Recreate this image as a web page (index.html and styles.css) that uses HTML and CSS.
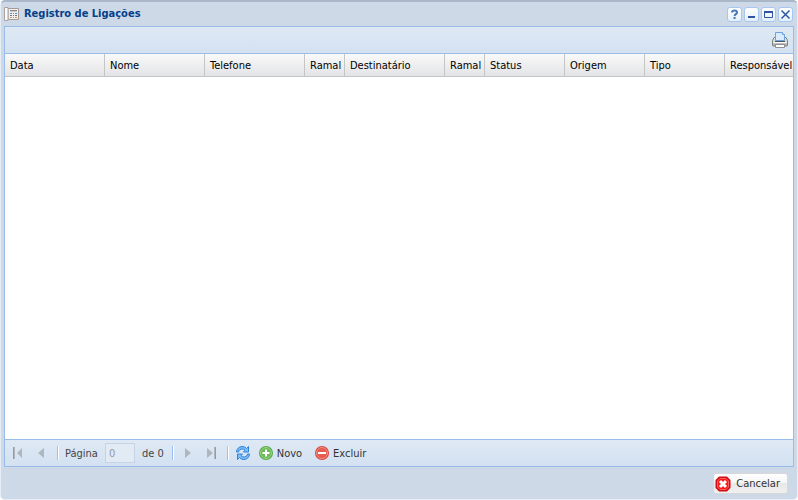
FILE: index.html
```html
<!DOCTYPE html>
<html lang="pt-BR">
<head>
<meta charset="utf-8">
<title>Registro de Ligações</title>
<link rel="stylesheet" href="styles.css">
</head>
<body>
<main class="window">
  <header class="titlebar">
    <svg class="icon" viewBox="0 0 16 16" aria-hidden="true">
      <path d="M4 2.500h10.500v11H4z" fill="#f1efee" stroke="#a49c98"/>
      <path d="M.5 1.500h3.500v13H.5z" fill="#fafafa" stroke="#aaa3a0"/>
      <path d="M6 4.500h7" stroke="#8a8a8a"/>
      <path d="M6 7.500h2M9 7.500h1M11 7.500h2" stroke="#4390df"/>
      <path d="M6 9.500h2M9 9.500h1M11 9.500h2" stroke="#777"/>
      <path d="M6 11.500h2M9 11.500h1M11 11.500h2" stroke="#e89048"/>
      <path d="M6 5.500h7" stroke="#c9c9c9"/>
    </svg>
    <h1 class="title">Registro de Ligações</h1>
    <div class="tools">
      <button class="tool" type="button" aria-label="Ajuda"><svg viewBox="0 0 13 13"><path d="M4 4.500q0-2 2.500-2T9 4.500q0 1-1 1.500t-1.500 2M6.500 9v2" fill="none" stroke="#4a7ab0" stroke-width="2"/></svg></button>
      <button class="tool" type="button" aria-label="Minimizar"><svg viewBox="0 0 13 13"><path d="M3 9h7" stroke="#2f54a5" stroke-width="2"/></svg></button>
      <button class="tool" type="button" aria-label="Maximizar"><svg viewBox="0 0 13 13"><path d="M2.500 3.500h8v6h-8z" fill="none" stroke="#2f54a5"/><path d="M2 4h9" stroke="#2f54a5" stroke-width="2"/></svg></button>
      <button class="tool" type="button" aria-label="Fechar"><svg viewBox="0 0 13 13"><path d="M2.500 2.500l8 8M10.500 2.500l-8 8" stroke="#2f54a5" stroke-width="1.500"/></svg></button>
    </div>
  </header>

  <section class="panel">
    <div class="toolbar">
      <button class="plain" type="button" aria-label="Imprimir">
        <svg class="icon" viewBox="0 0 16 16">
          <defs>
            <linearGradient id="printer" x2="0" y2="1"><stop stop-color="#eee"/><stop offset="1" stop-color="#a8a8a8"/></linearGradient>
          </defs>
          <path d="M2 5.500h12l1.500 3v4.500q0 1-1 1h-13q-1 0-1-1V8.500z" fill="url(#printer)" stroke="#808080"/>
          <path d="M3.500 8.500v-8h7l2 2v6z" fill="#d9ecfd" stroke="#6ba3dc"/>
          <path d="M10.500.5v2h2" fill="#fff" stroke="#6ba3dc"/>
          <path d="M3 9.500h10" stroke="#555"/>
          <path d="M1 10.500h14" stroke="#fafafa"/>
          <path d="M3.500 12.500h9v3h-9z" fill="#fff" stroke="#909090"/>
        </svg>
      </button>
    </div>
    <div class="grid">
      <table class="calls">
        <colgroup>
          <col class="wide"><col class="wide"><col class="wide"><col class="narrow"><col class="wide"><col class="narrow"><col class="medium"><col class="medium"><col class="medium"><col>
        </colgroup>
        <thead>
          <tr><th>Data</th><th>Nome</th><th>Telefone</th><th>Ramal</th><th>Destinatário</th><th>Ramal</th><th>Status</th><th>Origem</th><th>Tipo</th><th>Responsável</th></tr>
        </thead>
        <tbody></tbody>
      </table>
    </div>
    <nav class="pager" aria-label="Paginação">
      <button class="page-btn" type="button" disabled aria-label="Primeira página"><svg class="icon" viewBox="0 0 16 16"><path d="M3 2h2v12H3zM12 3v10L7 8z" fill="#b0b6be"/><path d="M3.500 2v12" stroke="#949ba4"/></svg></button>
      <button class="page-btn" type="button" disabled aria-label="Página anterior"><svg class="icon" viewBox="0 0 16 16"><path d="M11 3v10L5 8z" fill="#b0b6be"/></svg></button>
      <span class="sep"></span>
      <label class="muted" for="page">Página</label>
      <input class="page-input" id="page" type="text" value="0" disabled>
      <span class="muted">de 0</span>
      <span class="sep"></span>
      <button class="page-btn" type="button" disabled aria-label="Próxima página"><svg class="icon" viewBox="0 0 16 16"><path d="M5 3v10l6-5z" fill="#b0b6be"/></svg></button>
      <button class="page-btn" type="button" disabled aria-label="Última página"><svg class="icon" viewBox="0 0 16 16"><path d="M4 3v10l6-5zM11 2h2v12h-2z" fill="#b0b6be"/><path d="M12.500 2v12" stroke="#949ba4"/></svg></button>
      <span class="sep"></span>
      <button class="page-btn" type="button" aria-label="Atualizar">
        <svg class="icon" viewBox="0 0 16 16">
          <g fill="#7cc0f8" stroke="#2f80d8" stroke-linejoin="round">
            <path d="M1.500 7q.5-5 5.500-5.500 3 0 4.500 2l2-2v5.500H8.500l1.500-1.800Q8.500 3.700 6.500 4 3.500 4.500 3.500 7z"/>
            <path d="M14.500 9q-.5 5-5.500 5.500-3 0-4.500-2l-2 2V9h5L6 10.800q1.500 1.500 3.500 1.200 3-.5 3-3z"/>
          </g>
        </svg>
      </button>
      <button class="action" type="button">
        <svg class="icon" viewBox="0 0 16 16"><circle cx="8" cy="8" r="7" fill="#58a848"/><circle cx="8" cy="8" r="5.500" fill="#6cba58" stroke="#98d488"/><path d="M8 4.500v7M4.500 8h7" stroke="#fff" stroke-width="2"/></svg>
        <span>Novo</span>
      </button>
      <button class="action" type="button">
        <svg class="icon" viewBox="0 0 16 16"><circle cx="8" cy="8" r="7" fill="#d8443c"/><circle cx="8" cy="8" r="5.500" fill="#e65c4e" stroke="#f29385"/><path d="M4 8h8" stroke="#fff" stroke-width="2"/></svg>
        <span>Excluir</span>
      </button>
    </nav>
  </section>

  <footer class="buttons">
    <button class="cancel" type="button">
      <svg class="icon" viewBox="0 0 16 16"><path d="M4.500 1.500h7l3 3v7l-3 3h-7l-3-3v-7z" fill="#f81c1c" stroke="#d01014" stroke-width="2" stroke-linejoin="round"/><path d="M5 2.500h6L13.500 5v6L11 13.500H5L2.500 11V5z" fill="none" stroke="#fc5c5c"/><path d="M5 5l6 6M11 5l-6 6" stroke="#fff" stroke-width="3"/></svg>
      <span>Cancelar</span>
    </button>
  </footer>
</main>
</body>
</html>
```
FILE: styles.css
```css
* { box-sizing: border-box; }

body {
  margin: 0;
  background: #fff;
  color: #000;
  font: 11px/14px "DejaVu Sans Condensed", Tahoma, sans-serif;
}

button, input { font: inherit; color: inherit; }

button {
  display: flex;
  align-items: center;
  padding: 0;
  border: 0;
  background: none;
}

.icon { display: block; width: 16px; height: 16px; flex: none; }

.window {
  display: flex;
  flex-direction: column;
  min-height: 100vh;
  padding: 0 3px;
  border: 1px solid #e6edf7;
  border-top: 2px solid #a9b7c9;
  border-radius: 5px;
  background: #ced9e7;
}

.titlebar {
  display: flex;
  align-items: center;
  gap: 4px;
  height: 24px;
  padding-right: 1px;
}

.title {
  flex: 1;
  margin: 0;
  color: #04408c;
  font-size: 11px;
  font-weight: bold;
}

.tools { display: flex; gap: 2px; }

.tool {
  width: 15px;
  height: 15px;
  border: 1px solid #a5c7f0;
  border-radius: 3px;
  background: linear-gradient(#fff, #e4effc);
}

.tool svg { width: 13px; height: 13px; }

.panel {
  display: flex;
  flex: 1;
  flex-direction: column;
  border: 1px solid #99bce8;
  background: #fff;
}

.toolbar, .pager {
  display: flex;
  align-items: center;
  height: 27px;
  background: linear-gradient(#dfe9f5, #d3e1f1);
}

.toolbar {
  justify-content: flex-end;
  padding-right: 5px;
  border-bottom: 1px solid #99bce8;
}

.grid { flex: 1; overflow: hidden; }

.calls {
  width: 100%;
  table-layout: fixed;
  border-collapse: separate;
  border-spacing: 0;
}

.wide { width: 100px; }
.medium { width: 80px; }
.narrow { width: 40px; }

.calls th {
  height: 23px;
  padding: 1px 0 0 5px;
  border-right: 1px solid #c5c5c5;
  border-bottom: 1px solid #c5c5c5;
  background: linear-gradient(#f9f9f9, #e3e4e6);
  font-weight: normal;
  text-align: left;
  white-space: nowrap;
}

.calls th:last-child { border-right: 0; }

.pager {
  gap: 7px;
  padding-left: 5px;
  border-top: 1px solid #99bce8;
}

.sep {
  width: 2px;
  height: 14px;
  margin: 0 -1px 0 1px;
  border-left: 1px solid #98c0f4;
  border-right: 1px solid #fff;
}

.muted, .action span { padding-top: 2px; }

.muted { color: #444; }

.page-input {
  width: 30px;
  height: 20px;
  padding: 1px 3px 0;
  border: 1px solid #c6d3e4;
  background: #e2eaf4;
  color: #909aa8;
}

.action { gap: 3px; margin-right: 5px; color: #333; }

.buttons {
  display: flex;
  justify-content: flex-end;
  padding: 6px 6px 5px;
}

.cancel {
  gap: 5px;
  height: 21px;
  padding: 0 7px 0 1px;
  border: 1px solid #d8d8d8;
  border-radius: 3px;
  background: linear-gradient(#fff, #f5f5f5 50%, #e8e8e8 50%, #f0f0f0);
  color: #333;
}
```
